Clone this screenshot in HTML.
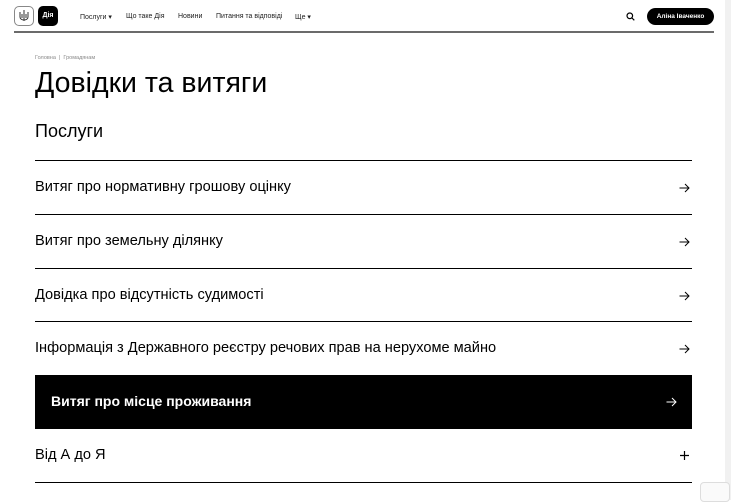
<!DOCTYPE html>
<html><head><meta charset="utf-8"><style>
*{margin:0;padding:0;box-sizing:border-box}
body{width:731px;height:500px;overflow:hidden;background:#fff;font-family:"Liberation Sans",sans-serif;color:#000;position:relative}
.sb{position:absolute;right:0;top:0;width:6px;height:500px;background:#f1f1f1}
.hdr{position:absolute;left:14px;top:0;width:700px;height:33px;border-bottom:2px solid #6b6b6b}
.lg1{position:absolute;left:0;top:6px;width:20px;height:20px;border:1px solid #888;border-radius:5px;background:#fff}
.lg2{position:absolute;left:24px;top:6px;width:20px;height:20px;background:#000;border-radius:5px;color:#fff;font-size:7px;font-weight:bold;text-align:center;line-height:20px}
.nav{position:absolute;top:13px;font-size:7px;color:#222}
.btn{position:absolute;left:633px;top:8px;width:67px;height:17px;background:#000;border-radius:9px;color:#fff;font-size:6.5px;font-weight:bold;text-align:center;line-height:17px}
.bc{position:absolute;left:35px;top:55px;font-size:5.5px;color:#888}
h1{position:absolute;left:35px;top:67px;font-size:28.5px;font-weight:normal}
h2{position:absolute;left:35px;top:121px;font-size:18px;font-weight:normal}
.it{position:absolute;left:35px;width:657px;border-top:1px solid #000;font-size:14.6px;line-height:53px;height:54px}
.it svg{position:absolute;right:2px;top:22px}
.blk{background:#000;color:#fff;padding-left:16px;font-weight:bold;border-top:none;font-size:14px}
.blk svg{right:15px}
</style></head><body>
<div class="sb"></div>
<div class="hdr">
<div class="lg1"><svg width="18" height="18" viewBox="0 0 18 18"><path d="M9 3v11M5 5v5c0 2 2 3 4 3s4-1 4-3V5M7 7v4M11 7v4" fill="none" stroke="#333" stroke-width="1"/></svg></div>
<div class="lg2">Дія</div>
<div class="nav" style="left:66px">Послуги ▾</div>
<div class="nav" style="left:112px">Що таке Дія</div>
<div class="nav" style="left:164px">Новини</div>
<div class="nav" style="left:202px">Питання та відповіді</div>
<div class="nav" style="left:281px">Ще ▾</div>
<svg style="position:absolute;left:612px;top:12px" width="9" height="9" viewBox="0 0 9 9"><circle cx="3.8" cy="3.8" r="2.8" fill="none" stroke="#000" stroke-width="1.2"/><path d="M6 6L8.3 8.3" stroke="#000" stroke-width="1.2"/></svg>
<div class="btn">Аліна Іваченко</div>
</div>
<div class="bc">Головна &nbsp;|&nbsp; Громадянам</div>
<h1>Довідки та витяги</h1>
<h2>Послуги</h2>
<div class="it" style="top:160px">Витяг про нормативну грошову оцінку<svg width="11" height="10" viewBox="0 0 11 10"><path d="M0.5 5H10M6 1l4 4-4 4" fill="none" stroke="#000" stroke-width="1"/></svg></div>
<div class="it" style="top:214px">Витяг про земельну ділянку<svg width="11" height="10" viewBox="0 0 11 10"><path d="M0.5 5H10M6 1l4 4-4 4" fill="none" stroke="#000" stroke-width="1"/></svg></div>
<div class="it" style="top:268px">Довідка про відсутність судимості<svg width="11" height="10" viewBox="0 0 11 10"><path d="M0.5 5H10M6 1l4 4-4 4" fill="none" stroke="#000" stroke-width="1"/></svg></div>
<div class="it" style="top:321px">Інформація з Державного реєстру речових прав на нерухоме майно<svg width="11" height="10" viewBox="0 0 11 10"><path d="M0.5 5H10M6 1l4 4-4 4" fill="none" stroke="#000" stroke-width="1"/></svg></div>
<div class="it blk" style="top:375px">Витяг про місце проживання<svg width="11" height="10" viewBox="0 0 11 10"><path d="M0.5 5H10M6 1l4 4-4 4" fill="none" stroke="#fff" stroke-width="1"/></svg></div>
<div class="it" style="top:429px;border-top:none;border-bottom:1px solid #000;height:54px">Від А до Я<svg width="9" height="9" viewBox="0 0 9 9" style="top:22px;right:3px"><path d="M4.5 0v9M0 4.5h9" stroke="#000" stroke-width="1.2"/></svg></div>
<div style="position:absolute;left:700px;top:482px;width:30px;height:20px;border:1px solid #ddd;border-radius:4px;background:#fafafa"></div>
</body></html>
